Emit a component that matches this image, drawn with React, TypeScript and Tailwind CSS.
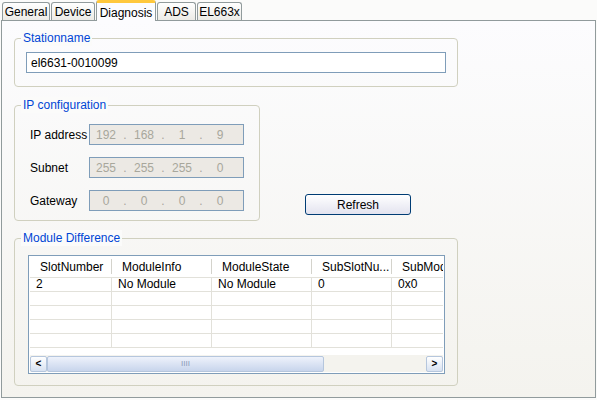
import React from "react";

const Tab = ({ label, active, w }: { label: string; active?: boolean; w: string }) =>
  active ? (
    <div className={`${w} h-[21px] -mb-px relative z-10 bg-[#fcfcfe] border border-[#919b9c] border-b-0 border-t-[3px] border-t-[#ffc83c] rounded-t-[3px] flex items-start justify-center pt-[1px]`}>{label}</div>
  ) : (
    <div className={`${w} h-[18px] mt-[2px] bg-gradient-to-b from-white to-[#ecebe6] border border-[#919b9c] border-b-0 rounded-t-[3px] flex items-center justify-center`}>{label}</div>
  );

const Group = ({ title, className, children }: { title: string; className: string; children?: React.ReactNode }) => (
  <div className={`relative border border-[#d0d0bf] rounded-[4px] ${className}`}>
    <span className="absolute -top-[9px] left-[6px] px-[2px] bg-[#fbfbfa] text-[#0046d5] leading-[16px]">{title}</span>
    {children}
  </div>
);

const Ip = ({ v }: { v: string[] }) => (
  <div className="w-[155px] h-[21px] border border-[#7f9db9] bg-[#ece9e4] flex items-center text-[#a8a79c]">
    {v.map((p, i) => (
      <React.Fragment key={i}>
        <span className="w-[32px] text-center">{p}</span>
        {i < 3 && <span className="w-[6px] text-center">.</span>}
      </React.Fragment>
    ))}
  </div>
);

const cols = [82, 100, 100, 80, 56];

export default function App() {
  return (
    <div className="w-[597px] h-[400px] bg-[#fbfbfa] text-[12px] text-black overflow-hidden" style={{ fontFamily: "'Liberation Sans', Arial, sans-serif" }}>
      <div className="flex items-end pl-[2px] gap-[1px] h-[20px] bg-[#fbfbfa]">
        <Tab label="General" w="w-[48px]" />
        <Tab label="Device" w="w-[44px]" />
        <Tab label="Diagnosis" w="w-[60px]" active />
        <Tab label="ADS" w="w-[39px]" />
        <Tab label="EL663x" w="w-[45px]" />
      </div>
      <div className="h-[378px] mx-[1px] border border-[#919b9c] bg-gradient-to-b from-[#fcfcfe] to-[#f4f3ee] pl-[12px] pt-[17px]">
        <Group title="Stationname" className="w-[444px] h-[49px] pt-[13px] pl-[11px]">
          <div className="w-[420px] h-[21px] border border-[#7f9db9] bg-white flex items-center pl-[4px]">el6631-0010099</div>
        </Group>
        <div className="flex items-end mt-[18px]">
          <Group title="IP configuration" className="w-[246px] h-[116px] pt-[18px] pl-[15px] flex flex-col gap-[12px]">
            {[["IP address", ["192", "168", "1", "9"]], ["Subnet", ["255", "255", "255", "0"]], ["Gateway", ["0", "0", "0", "0"]]].map(([l, v]) => (
              <div key={l as string} className="flex items-center">
                <span className="w-[59px]">{l as string}</span>
                <Ip v={v as string[]} />
              </div>
            ))}
          </Group>
          <button className="ml-[45px] mb-[6px] w-[106px] h-[21px] border border-[#003c74] rounded-[3px] bg-gradient-to-b from-white to-[#e3e3ef]">Refresh</button>
        </div>
        <Group title="Module Difference" className="mt-[17px] w-[444px] h-[148px] pt-[16px] pl-[13px]">
          <div className="w-[417px] h-[119px] border border-[#7f9db9] bg-white flex flex-col">
            <div className="flex h-[22px] bg-white border-b border-[#e2e1da] overflow-hidden w-[413px] ml-[1px]">
              {["SlotNumber", "ModuleInfo", "ModuleState", "SubSlotNu...", "SubModu"].map((h, i) => (
                <div key={h} style={{ width: cols[i] }} className="shrink-0 flex items-center pl-[10px] whitespace-nowrap overflow-hidden border-r border-[#d4d3cc] last:border-r-0 my-[3px]">{h}</div>
              ))}
            </div>
            <div className="flex-1 overflow-hidden w-[413px] ml-[1px]">
              {[0, 1, 2, 3, 4].map((r) => (
                <div key={r} className="flex h-[14px] border-b border-[#e2e1da]">
                  {(r === 0 ? ["2", "No Module", "No Module", "0", "0x0"] : ["", "", "", "", ""]).map((c, i) => (
                    <div key={i} style={{ width: cols[i] }} className="shrink-0 pl-[6px] leading-[13px] border-r border-[#e2e1da] last:border-r-0 whitespace-nowrap">{c}</div>
                  ))}
                </div>
              ))}
            </div>
            <div className="h-[17px] mx-[1px] mb-[1px] bg-[#f4f3ee] flex items-center">
              <div className="w-[17px] h-[16px] border border-[#b5c6dd] rounded-[2px] bg-gradient-to-b from-white to-[#d8e2f1] flex items-center justify-center text-[10px] font-bold">&lt;</div>
              <div className="w-[277px] h-[16px] border border-[#b5c6dd] rounded-[2px] bg-gradient-to-b from-[#eef2fb] to-[#c8d5ec] flex items-center justify-center text-[8px] text-[#8a9bb8]">IIII</div>
              <div className="flex-1" />
              <div className="w-[17px] h-[16px] border border-[#b5c6dd] rounded-[2px] bg-gradient-to-b from-white to-[#d8e2f1] flex items-center justify-center text-[10px] font-bold">&gt;</div>
            </div>
          </div>
        </Group>
      </div>
    </div>
  );
}
